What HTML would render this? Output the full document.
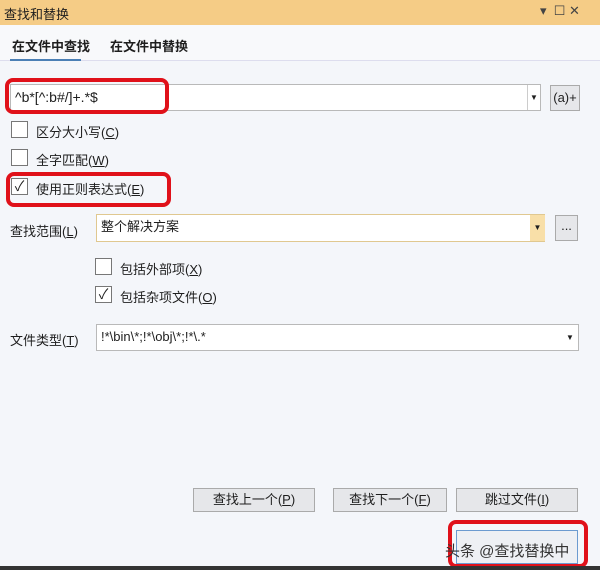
<!DOCTYPE html><html><head><style>
*{margin:0;padding:0;box-sizing:border-box}
body{width:600px;height:570px;overflow:hidden;background:#f4f6fa;font-family:"Liberation Sans","Noto Sans CJK SC",sans-serif;font-size:13px;color:#1e1e1e;position:relative}
.a{position:absolute}
.cb{position:absolute;width:17px;height:17px;border:1px solid #777;background:#fff;font-size:14px;line-height:15px;text-align:center}
.inp{position:absolute;background:#fff;border:1px solid #b9b9b9;padding-left:4px;line-height:24px}
.btn{position:absolute;height:24px;border:1px solid #aaa;background:#e6e7ea;text-align:center;line-height:22px}
.red{position:absolute;border:4px solid #e0111a;border-radius:8px}
</style></head><body>
<div class="a" style="left:0;top:0;width:600px;height:25px;background:#f5cc86"></div>
<div class="a" style="left:4px;top:4px;font-size:13px">查找和替换</div>
<div class="a" style="left:540px;top:3px;font-size:13px;color:#444">▾ &nbsp;☐ ✕</div>
<div class="a" style="left:0;top:25px;width:600px;height:36px;background:#f8f9fb;border-bottom:1px solid #dde"></div>
<div class="a" style="left:12px;top:36px;font-weight:bold">在文件中查找</div>
<div class="a" style="left:110px;top:36px;font-weight:bold">在文件中替换</div>
<div class="a" style="left:10px;top:59px;width:71px;height:2px;background:#4a7fb5"></div>
<div class="inp" style="left:10px;top:84px;width:531px;height:27px;font-size:14px">^b*[^:b#/]+.*$</div>
<div class="a" style="left:527px;top:85px;width:13px;height:25px;border-left:1px solid #ccc;font-size:8px;text-align:center;line-height:25px">▼</div>
<div class="btn" style="left:550px;top:85px;width:30px;height:26px;line-height:24px">(a)+</div>
<div class="red" style="left:5px;top:78px;width:164px;height:36px"></div>
<div class="cb" style="left:11px;top:121px"></div><div class="a" style="left:36px;top:122px">区分大小写(<u>C</u>)</div>
<div class="cb" style="left:11px;top:149px"></div><div class="a" style="left:36px;top:150px">全字匹配(<u>W</u>)</div>
<div class="cb" style="left:11px;top:178px">✓</div><div class="a" style="left:36px;top:179px">使用正则表达式(<u>E</u>)</div>
<div class="red" style="left:6px;top:172px;width:165px;height:35px"></div>
<div class="a" style="left:10px;top:221px">查找范围(<u>L</u>)</div>
<div class="inp" style="left:96px;top:214px;width:449px;height:28px;border-color:#e0c890">整个解决方案</div>
<div class="a" style="left:530px;top:215px;width:15px;height:26px;background:#f8dfa8;font-size:8px;text-align:center;line-height:26px">▼</div>
<div class="btn" style="left:555px;top:215px;width:23px;height:26px;line-height:20px">...</div>
<div class="cb" style="left:95px;top:258px"></div><div class="a" style="left:120px;top:259px">包括外部项(<u>X</u>)</div>
<div class="cb" style="left:95px;top:286px">✓</div><div class="a" style="left:120px;top:287px">包括杂项文件(<u>O</u>)</div>
<div class="a" style="left:10px;top:330px">文件类型(<u>T</u>)</div>
<div class="inp" style="left:96px;top:324px;width:483px;height:27px">!*\bin\*;!*\obj\*;!*\.*</div>
<div class="a" style="left:566px;top:325px;font-size:8px;line-height:25px">▼</div>
<div class="btn" style="left:193px;top:488px;width:122px">查找上一个(<u>P</u>)</div>
<div class="btn" style="left:333px;top:488px;width:114px">查找下一个(<u>F</u>)</div>
<div class="btn" style="left:456px;top:488px;width:122px">跳过文件(<u>I</u>)</div>
<div class="btn" style="left:456px;top:530px;width:122px;height:34px;background:#eef0f4;border-color:#6c9bd0"></div>
<div class="red" style="left:448px;top:520px;width:140px;height:48px"></div>
<div class="a" style="left:445px;top:540px;font-size:15px;color:#333">头条 @查找替换中</div>
<div class="a" style="left:0;top:566px;width:600px;height:4px;background:#333"></div>
</body></html>
